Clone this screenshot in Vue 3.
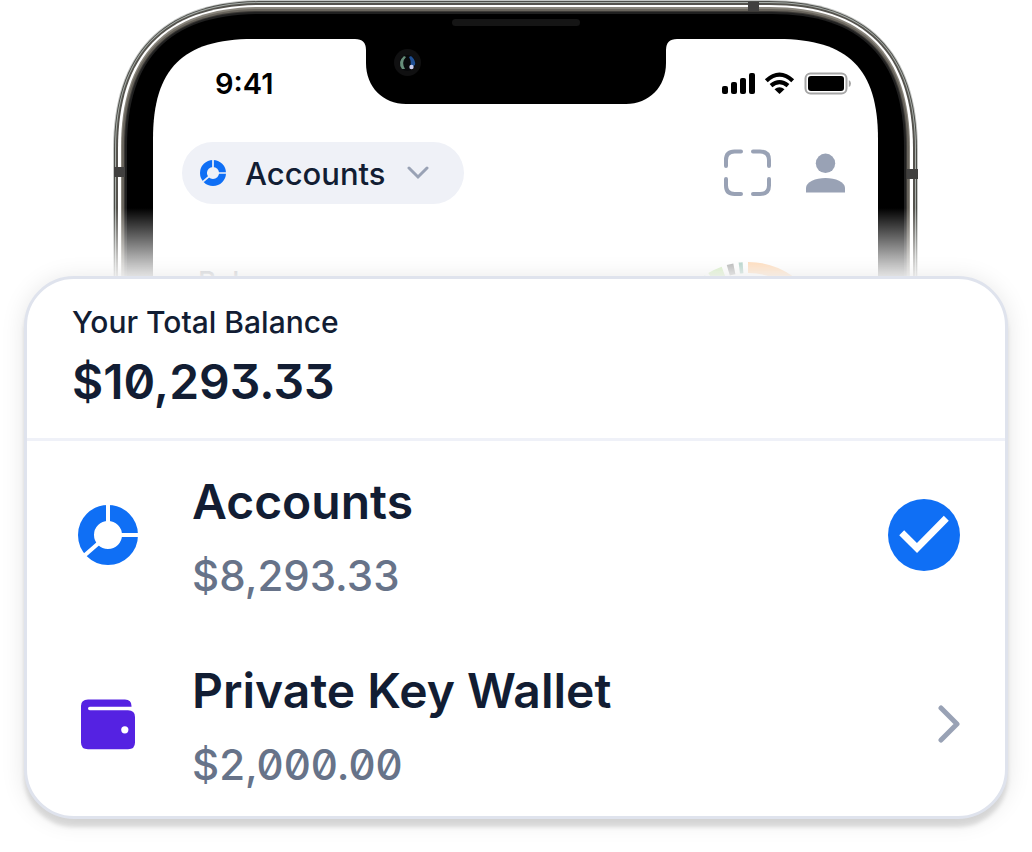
<script setup>
// Outline of the handset, inset by d pixels, running down both sides.
function outline(d, top = d) {
  const l = 113 + d
  const r = 918 - d
  const reach = 150 - d * 1.25
  const pull = 51 - d * 0.53
  return [
    `M${l} 300V${top + reach}`,
    `C${l} ${top + pull} ${l + pull} ${top} ${l + reach} ${top}`,
    `H${r - reach}`,
    `C${r - pull} ${top} ${r} ${top + pull} ${r} ${top + reach}`,
    'V300Z',
  ].join('')
}

const bands = [
  { d: 0, fill: '#c4c6c4' },
  { d: 1, fill: '#4c4d49' },
  { d: 2, fill: '#a9afaa' },
  { d: 3, fill: '#55534e' },
  { d: 5, fill: '#ffffff' },
  { d: 8, top: 7, fill: '#8a867d' },
  { d: 9, fill: '#68645c' },
  { d: 11, fill: '#3b3936' },
  { d: 12, fill: '#202020' },
  { d: 14, fill: '#000000' },
  { d: 40, top: 39, fill: '#ffffff' },
].map((b) => ({ ...b, path: outline(b.d, b.top) }))

function arc(from, to) {
  const p = (deg) => {
    const a = (deg * Math.PI) / 180
    return `${(77 + 71.5 * Math.sin(a)).toFixed(2)} ${(77 - 71.5 * Math.cos(a)).toFixed(2)}`
  }
  return `M${p(from)}A71.5 71.5 0 0 1 ${p(to)}`
}

const slices = [
  { path: arc(-60, -34), color: '#4fb96a' },
  { path: arc(-31, -20), color: '#6fc52c' },
  { path: arc(-16, -11), color: '#000000' },
  { path: arc(-7, -4), color: '#006b4a' },
  { path: arc(0, 80), color: '#ff8a1c' },
]

const accounts = [
  { name: 'Accounts', amount: '$8,293.33', icon: 'ring', selected: true },
  { name: 'Private Key Wallet', amount: '$2,000.00', icon: 'wallet', selected: false },
]
</script>

<template>
  <main class="page">
    <section class="phone" aria-label="Phone">
      <svg class="frame" viewBox="113 0 806 276" preserveAspectRatio="none" aria-hidden="true">
        <path v-for="b in bands" :key="b.d" :d="b.path" :fill="b.fill" />
        <path d="M355 37H677V39Q666 39 666 50V63C666 87 649 104 626 104H406C383 104 366 87 366 63V50Q366 39 355 39Z" fill="#000" />
        <rect x="452" y="19" width="128" height="7" rx="3.5" fill="#151515" />
        <circle cx="407.500" cy="62.500" r="13.500" fill="#101011" />
        <circle cx="407.500" cy="63" r="8" fill="#08090b" />
        <path d="M404 56Q397 62 402 69L405 69Q401 62 406 57Z" fill="#668d79" />
        <path d="M411 56Q416 60 415 65L410 68Q412 62 409 57Z" fill="#1f4f94" />
        <circle cx="411.500" cy="67" r="2.200" fill="#cdd0f0" />
        <path d="M748 2h11v9h-11zM114 167h11v10h-11zM907 169h11v10h-11z" fill="#41403f" />
      </svg>

      <div class="status">
        <span class="time">9:41</span>
        <svg width="130" height="24" viewBox="0 0 130 24" aria-hidden="true">
          <rect x="1" y="14" width="6" height="8" rx="2" />
          <rect x="10" y="10" width="6" height="12" rx="2" />
          <rect x="19" y="6" width="6" height="16" rx="2" />
          <rect x="28" y="1" width="6" height="21" rx="2" />
          <path d="M58.500 22L53.500 17.200Q58.500 13.400 63.500 17.200Z" />
          <path d="M50 13.700Q58.500 6.600 67 13.700M45.300 8.700Q58.500 -3.500 71.700 8.700" fill="none" stroke="#000" stroke-width="4.200" />
          <rect x="84.500" y="1.500" width="41" height="20" rx="5" fill="none" stroke="#a6a6a6" stroke-width="2" />
          <rect x="87" y="4" width="36" height="15" rx="3" />
          <path d="M127.800 8Q130 9 130 11.500T127.800 15Z" fill="#a6a6a6" />
        </svg>
      </div>

      <div class="toolbar">
        <button class="picker" type="button" aria-haspopup="listbox">
          <svg width="26" height="26" viewBox="0 0 60 60" aria-hidden="true">
            <circle cx="30" cy="30" r="22" fill="none" stroke="#0f6ff5" stroke-width="16" />
            <path d="M30 30V-1M30 30H61M30 30L7 50" stroke="#eff1f7" stroke-width="4" />
          </svg>
          <span>Accounts</span>
          <svg class="caret" width="22" height="14" viewBox="0 0 22 14" aria-hidden="true">
            <path d="M2 2L11 11L20 2" fill="none" stroke="#99a2b5" stroke-width="3" stroke-linecap="round" />
          </svg>
        </button>
        <div class="actions">
          <button class="plain" type="button" aria-label="Scan">
            <svg width="48" height="48" viewBox="0 0 48 48" aria-hidden="true">
              <path d="M3 17V11Q3 2.500 11.500 2.500H18M30 2.500H37Q46 2.500 46 11V17M46 30V36.500Q46 45 37 45H30M18 45H11.500Q3 45 3 36.500V30" fill="none" stroke="#99a2b5" stroke-width="4" stroke-linecap="round" />
            </svg>
          </button>
          <button class="plain" type="button" aria-label="Profile">
            <svg width="40" height="40" viewBox="0 0 40 40" aria-hidden="true" fill="#99a2b5">
              <circle cx="20.500" cy="10.300" r="9.700" />
              <path d="M1 39.500V35C1 29 10.500 25 20.500 25S40 29 40 35V39.500Z" />
            </svg>
          </button>
        </div>
      </div>

      <div class="summary" aria-hidden="true">
        <span>Balance</span>
        <svg width="154" height="154" viewBox="0 0 154 154">
          <path v-for="s in slices" :key="s.path" :d="s.path" fill="none" :stroke="s.color" stroke-width="11" />
        </svg>
      </div>
    </section>

    <section class="card">
      <header class="total">
        <p class="label">Your Total Balance</p>
        <p class="sum">$10,293.33</p>
      </header>
      <ul class="list">
        <li v-for="a in accounts" :key="a.name">
          <button class="row" type="button" :aria-pressed="a.selected">
            <span class="glyph">
              <svg v-if="a.icon === 'ring'" width="60" height="60" viewBox="0 0 60 60" aria-hidden="true">
                <circle cx="30" cy="30" r="22" fill="none" stroke="#0f6ff5" stroke-width="16" />
                <path d="M30 30V-1M30 30H61M30 30L7 50" stroke="#fff" stroke-width="4" />
              </svg>
              <svg v-else width="60" height="60" viewBox="0 0 60 60" aria-hidden="true">
                <path d="M10 5.500H47Q53.500 5.500 53.500 12V12.700H11.800A1.800 1.800 0 0 0 11.800 16.300H50Q57 16.300 57 23V48.500Q57 55.300 50 55.300H10Q3 55.300 3 48.500V12Q3 5.500 10 5.500Z" fill="#5522e2" />
                <circle cx="46.800" cy="35.800" r="3.600" fill="#fff" />
              </svg>
            </span>
            <span class="text">
              <span class="name">{{ a.name }}</span>
              <span class="amount">{{ a.amount }}</span>
            </span>
            <svg v-if="a.selected" width="72" height="72" viewBox="0 0 72 72" aria-hidden="true">
              <circle cx="36" cy="36" r="36" fill="#0f6ff5" />
              <path d="M13.700 33.800L29 49L58.300 19.300" fill="none" stroke="#fff" stroke-width="7" />
            </svg>
            <svg v-else width="22" height="38" viewBox="0 0 22 38" aria-hidden="true">
              <path d="M3 3L19 19L3 35" fill="none" stroke="#99a2b5" stroke-width="5" stroke-linecap="round" stroke-linejoin="round" />
            </svg>
          </button>
        </li>
      </ul>
    </section>
  </main>
</template>

<style>
body {
  margin: 0;
  background: #fff;
}
</style>

<style scoped>
.page {
  padding: 0 24px 33px;
  font-family: Inter, "Liberation Sans", sans-serif;
  color: #121d33;
  overflow: hidden;
}

button {
  border: 0;
  padding: 0;
  background: none;
  color: inherit;
  font: inherit;
  cursor: pointer;
}

.phone {
  position: relative;
  box-sizing: border-box;
  width: 100%;
  max-width: 806px;
  height: 276px;
  margin: 0 auto;
  padding-top: 68px;
  overflow: hidden;
}

.phone::after {
  content: "";
  position: absolute;
  inset: 208px 0 0;
  background: linear-gradient(rgba(255, 255, 255, 0), rgba(255, 255, 255, 0.92));
  pointer-events: none;
}

.frame {
  position: absolute;
  inset: 0;
  width: 100%;
  height: 100%;
}

.status,
.toolbar,
.summary {
  position: relative;
  display: flex;
  justify-content: space-between;
}

.status {
  align-items: flex-end;
  height: 28px;
  padding: 0 68px 0 102px;
}

.time {
  color: #000;
  font-size: 29px;
  font-weight: 600;
  line-height: 24px;
}

.toolbar {
  align-items: center;
  margin-top: 46px;
  padding: 0 74px 0 69px;
}

.picker {
  display: flex;
  align-items: center;
  height: 62px;
  padding: 0 35px 0 18px;
  border-radius: 31px;
  background: #eff1f7;
  font-size: 31px;
  font-weight: 500;
}

.picker span {
  margin-left: 19px;
}

.caret {
  margin-left: 21px;
}

.actions {
  display: flex;
  align-items: center;
  gap: 34px;
}

.plain {
  display: flex;
}

.summary {
  align-items: flex-start;
  margin-top: 58px;
  padding: 0 94px 0 85px;
  color: #3b4150;
  font-size: 28px;
  font-weight: 500;
  line-height: 40px;
}

.card {
  position: relative;
  border: 3px solid #dfe3ed;
  border-radius: 50px;
  background: #fff;
  box-shadow: 0 8px 4px rgba(0, 0, 0, 0.12), 0 2px 24px rgba(0, 0, 0, 0.1);
}

.total {
  padding: 21px 45px 18px;
  border-bottom: 3px solid #eff1f8;
}

.label,
.sum {
  margin: 0;
}

.label {
  font-size: 30px;
  font-weight: 500;
  line-height: 44px;
}

.sum {
  font-size: 48px;
  font-weight: 600;
  line-height: 76px;
  font-feature-settings: "zero", "cv09";
}

.list {
  display: flex;
  flex-direction: column;
  gap: 41px;
  margin: 0;
  padding: 20px 0 18px;
  list-style: none;
}

.row {
  display: flex;
  align-items: center;
  width: 100%;
  padding: 0 45px 0 51px;
  text-align: left;
}

.glyph {
  display: flex;
}

.text {
  display: flex;
  flex: 1;
  flex-direction: column;
  margin-left: 54px;
}

.name {
  font-size: 48px;
  font-weight: 600;
  line-height: 82px;
}

.amount {
  color: #677389;
  font-size: 42px;
  font-weight: 500;
  line-height: 66px;
  font-feature-settings: "zero";
}
</style>
